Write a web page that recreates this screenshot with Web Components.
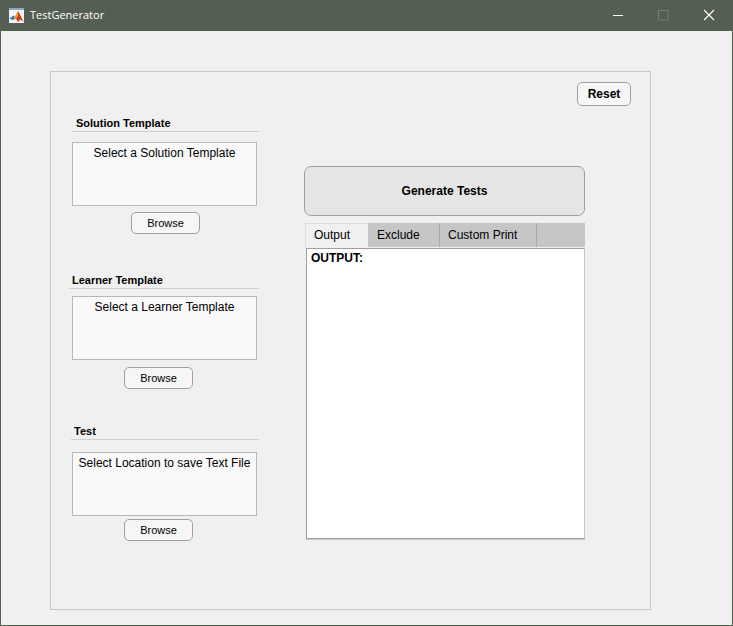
<!DOCTYPE html>
<html>
<head>
<meta charset="utf-8">
<title>TestGenerator</title>
<style>
  html, body {margin: 0; padding: 0; height: 100%; background: #f0f0f0;}
</style>
</head>
<body>
<app-window>
  <title-bar slot="bar" label="TestGenerator"></title-bar>
  <main-panel>
    <div slot="left">
      <file-section label="Solution Template" hint="Select a Solution Template" style="--title-x:4px;--rule-x:0px;--title-top:44px;--box-gap:10px;--browse-gap:6px;--browse-x:59px"></file-section>
      <file-section label="Learner Template" hint="Select a Learner Template" style="--title-x:0px;--rule-x:-3px;--title-top:39px;--box-gap:7px;--browse-gap:7px;--browse-x:52px"></file-section>
      <file-section label="Test" hint="Select Location to save Text File" style="--title-x:2px;--rule-x:-1px;--title-top:35px;--box-gap:12px;--browse-gap:3px;--browse-x:52px"></file-section>
    </div>
    <app-button slot="reset" bold style="width:54px;height:24px">Reset</app-button>
    <app-button slot="right" bold fill style="width:281px;height:50px">Generate Tests</app-button>
    <output-tabs slot="right"></output-tabs>
  </main-panel>
</app-window>

<script>
// outer window frame, 1px border round the whole thing
class AppWindow extends HTMLElement {
    constructor() {
        super();
        this.attachShadow({mode: 'open'}).innerHTML = /*html*/`
        <style>
            :host {display: block; box-sizing: border-box; width: 733px; height: 626px;
                border: 1px solid #555e52; border-top: 0; background: #f0f0f0;
                font-family: "Liberation Sans", Arial, sans-serif; font-size: 12px; color: #000;}
            .body {padding: 40px 81px 15px 49px;}
        </style>
        <slot name="bar"></slot>
        <div class="body"><slot></slot></div>`;
    }
}

class TitleBar extends HTMLElement {
    constructor() {
        super();
        this.attachShadow({mode: 'open'}).innerHTML = /*html*/`
        <style>
            :host {display: flex; align-items: center; height: 31px; margin: 0 -1px;
                background: #555e52; color: #fff; font-family: "Open Sans", sans-serif; font-size: 11px;}
            .logo {margin-left: 9px; width: 15px; height: 15px; flex: none;}
            .name {margin-left: 6px; flex: 1; position: relative; top: -1px;}
            .ctl {width: 46px; height: 31px; flex: none; display: block;}
        </style>
        <svg class="logo" viewBox="0 0 15 15">
            <rect width="15" height="15" fill="#f4f4f4"/>
            <rect width="15" height="2" fill="#8aa9c8"/>
            <path d="M0.5 10.5 L4.5 7.5 L6.5 9.5 L4 12 Z" fill="#2f78bd"/>
            <path d="M4.5 12 L7 7 L9 3 L10.5 5.5 L14.5 14 L11.5 11.5 L9 14 L7 10.5 Z" fill="#cf3f14"/>
            <path d="M4.5 11.5 L7 7 L9 3 L9 8 L7 10.5 Z" fill="#efa52f"/>
        </svg>
        <span class="name"></span>
        <svg class="ctl" viewBox="0 0 46 31"><path d="M18 15.5H28" stroke="#fff" stroke-width="1"/></svg>
        <svg class="ctl" viewBox="0 0 46 31"><rect x="17.5" y="10.5" width="9.5" height="9.5" fill="none" stroke="#767e73"/></svg>
        <svg class="ctl" viewBox="0 0 46 31"><path d="M17 10L27 20M27 10L17 20" stroke="#fff" stroke-width="1.1"/></svg>`;
        this.shadowRoot.querySelector('.name').textContent = this.getAttribute('label');
    }
}

class MainPanel extends HTMLElement {
    constructor() {
        super();
        this.attachShadow({mode: 'open'}).innerHTML = /*html*/`
        <style>
            :host {display: flex; box-sizing: border-box; width: 601px; height: 539px;
                border: 1px solid #c8c8c8; background: #f0f0f0;}
            .left {width: 208px; margin-left: 21px; flex: none;}
            .main {flex: 1; display: flex; flex-direction: column;}
            .top {display: flex; justify-content: flex-end; padding: 10px 19px 0 0;}
            .right {margin: 60px 0 0 24px; display: flex; flex-direction: column; gap: 7px;}
        </style>
        <div class="left"><slot name="left"></slot></div>
        <div class="main">
            <div class="top"><slot name="reset"></slot></div>
            <div class="right"><slot name="right"></slot></div>
        </div>`;
    }
}

class AppButton extends HTMLElement {
    constructor() {
        super();
        this.attachShadow({mode: 'open'}).innerHTML = /*html*/`
        <style>
            :host {display: flex; align-items: center; justify-content: center; box-sizing: border-box;
                border: 1px solid #a0a0a0; border-radius: 5px; background: #f6f6f6; font-size: 12px;}
            :host([bold]) {font-weight: bold;}
            :host([fill]) {background: #e5e5e5; border-radius: 7px;}
        </style>
        <slot></slot>`;
    }
}

// heading + rule + read-only text box + browse button
class FileSection extends HTMLElement {
    constructor() {
        super();
        this.attachShadow({mode: 'open'}).innerHTML = /*html*/`
        <style>
            :host {display: block;}
            h4 {margin: 0; padding-top: var(--title-top); padding-left: var(--title-x);
                font-size: 11px; line-height: 14px; font-weight: bold;}
            .rule {height: 1px; background: #d0d0d0; margin-top: 1px;
                margin-left: var(--rule-x); width: calc(187px - var(--rule-x));}
            .box {box-sizing: border-box; width: 185px; height: 64px; margin-top: var(--box-gap);
                border: 1px solid #b8b8b8; background: #f9f9f9; text-align: center;
                padding-top: 3px; line-height: 15px; white-space: nowrap;}
            app-button {width: 69px; height: 22px; margin-top: var(--browse-gap);
                margin-left: var(--browse-x); font-size: 11px;}
        </style>
        <h4></h4>
        <div class="rule"></div>
        <div class="box"></div>
        <app-button>Browse</app-button>`;
        this.shadowRoot.querySelector('h4').textContent = this.getAttribute('label');
        this.shadowRoot.querySelector('.box').textContent = this.getAttribute('hint');
    }
}

class OutputTabs extends HTMLElement {
    constructor() {
        super();
        this.attachShadow({mode: 'open'}).innerHTML = /*html*/`
        <style>
            :host {display: block; width: 280px; margin-left: 1px;}
            .bar {display: flex; height: 24px; background: #c6c6c6;}
            .tab {box-sizing: border-box; line-height: 24px; padding-left: 9px; border-right: 1px solid #a8a8a8;}
            .tab.on {background: #f0f0f0; border: 0; border-left: 1px solid #dcdcdc; border-top: 1px solid #dcdcdc;
                padding-left: 8px; line-height: 22px; width: 63px; height: 25px;}
            .pane {box-sizing: border-box; height: 291px; margin: 1px 0 0 1px; background: #fff;
                border-top: 1px solid #a0a0a0; border-left: 1px solid #a0a0a0; border-right: 1px solid #c8c8c8;
                border-bottom: 1px solid #a0a0a0; box-shadow: 0 1px 0 #c8c8c8;
                padding: 2px 4px; font-weight: bold; line-height: 14px;}
        </style>
        <div class="bar">
            <div class="tab on">Output</div>
            <div class="tab" style="width:72px">Exclude</div>
            <div class="tab" style="width:97px;padding-left:8px">Custom Print</div>
        </div>
        <div class="pane">OUTPUT:</div>`;
    }
}

customElements.define('app-window', AppWindow);
customElements.define('title-bar', TitleBar);
customElements.define('main-panel', MainPanel);
customElements.define('app-button', AppButton);
customElements.define('file-section', FileSection);
customElements.define('output-tabs', OutputTabs);
</script>
</body>
</html>
